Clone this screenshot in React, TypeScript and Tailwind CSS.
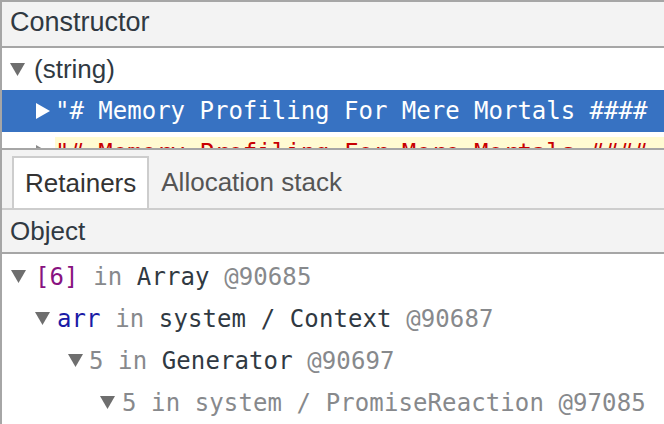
const SANS = "font-['Liberation_Sans',Arial,sans-serif]";
const MONO = "font-['DejaVu_Sans_Mono',Menlo,monospace]";

function Down({ className = "" }: { className?: string }) {
  return (
    <svg width="15" height="13" viewBox="0 0 15 13" className={className}>
      <path d="M0 0 L15 0 L7.5 13 Z" fill="currentColor" />
    </svg>
  );
}

function Right({ className = "" }: { className?: string }) {
  return (
    <svg width="14" height="16" viewBox="0 0 14 16" className={className}>
      <path d="M0 0 L14 8 L0 16 Z" fill="currentColor" />
    </svg>
  );
}

const label = '"# Memory Profiling For Mere Mortals ####';

interface Retainer {
  indent: number;
  gap: number;
  parts: { text: string; color: string }[];
}

const retainers: Retainer[] = [
  {
    indent: 9,
    gap: 9,
    parts: [
      { text: "[6]", color: "text-[#881280]" },
      { text: " in ", color: "text-[#87898c]" },
      { text: "Array", color: "text-[#303942]" },
      { text: " @90685", color: "text-[#87898c]" },
    ],
  },
  {
    indent: 33,
    gap: 7,
    parts: [
      { text: "arr", color: "text-[#1a1aa6]" },
      { text: " in ", color: "text-[#87898c]" },
      { text: "system / Context", color: "text-[#303942]" },
      { text: " @90687", color: "text-[#87898c]" },
    ],
  },
  {
    indent: 66,
    gap: 6,
    parts: [
      { text: "5", color: "text-[#87898c]" },
      { text: " in ", color: "text-[#87898c]" },
      { text: "Generator", color: "text-[#303942]" },
      { text: " @90697", color: "text-[#87898c]" },
    ],
  },
  {
    indent: 98,
    gap: 7,
    parts: [
      { text: "5 in system / PromiseReaction @97085", color: "text-[#87898c]" },
    ],
  },
];

export default function App() {
  return (
    <div className={`w-[664px] h-[424px] overflow-hidden bg-white border-l-2 border-t-2 border-[#a6a6a6] ${SANS}`}>
      {/* Constructor grid */}
      <div className="h-[44px] bg-[#f3f3f3] border-b-2 border-[#a6a6a6] box-content px-[8px] text-[27px] leading-[40px] text-[#303942]">
        Constructor
      </div>
      <div className="h-[100px] overflow-hidden">
        <div className="h-[42px] flex items-center pl-[8px] gap-[9px]">
          <Down className="text-[#6e6e6e] shrink-0" />
          <span className="text-[26px] text-[#303942]">(string)</span>
        </div>
        <div className="h-[42px] flex items-center bg-[#3772c2] pl-[34px] gap-[5px]">
          <Right className="text-white shrink-0" />
          <span className={`${MONO} text-[24px] text-white whitespace-nowrap`}>{label}</span>
        </div>
        <div className="h-[42px] flex items-center pl-[34px] gap-[5px]">
          <Right className="text-[#8a8a8a] shrink-0" />
          <span className={`${MONO} text-[24px] leading-[32px] text-[#c80000] bg-[#fffbd2] whitespace-nowrap flex-1`}>
            {label}
          </span>
        </div>
      </div>

      {/* Tabs */}
      <div className="border-t-2 border-[#a6a6a6] h-[58px] bg-[#f3f3f3] border-b-2 border-b-[#cdcdcd] box-content flex items-end pl-[10px] text-[26px]">
        <div className="h-[52px] bg-white border-2 border-b-0 border-[#cdcdcd] px-[11px] flex items-center text-[#333333]">
          Retainers
        </div>
        <div className="h-[52px] px-[12px] flex items-center text-[#555555]">Allocation stack</div>
      </div>

      {/* Retainers grid */}
      <div className="h-[42px] bg-[#f3f3f3] border-b-2 border-[#a6a6a6] box-content px-[8px] text-[26px] leading-[42px] text-[#303942]">
        Object
      </div>
      <div>
        {retainers.map((r, i) => (
          <div
            key={i}
            className="h-[42px] flex items-center pt-[3px]"
            style={{ paddingLeft: r.indent, gap: r.gap }}
          >
            <Down className="text-[#6e6e6e] shrink-0" />
            <span className={`${MONO} text-[24px] tracking-[0.1px] whitespace-pre`}>
              {r.parts.map((p, j) => (
                <span key={j} className={p.color}>
                  {p.text}
                </span>
              ))}
            </span>
          </div>
        ))}
      </div>
    </div>
  );
}
